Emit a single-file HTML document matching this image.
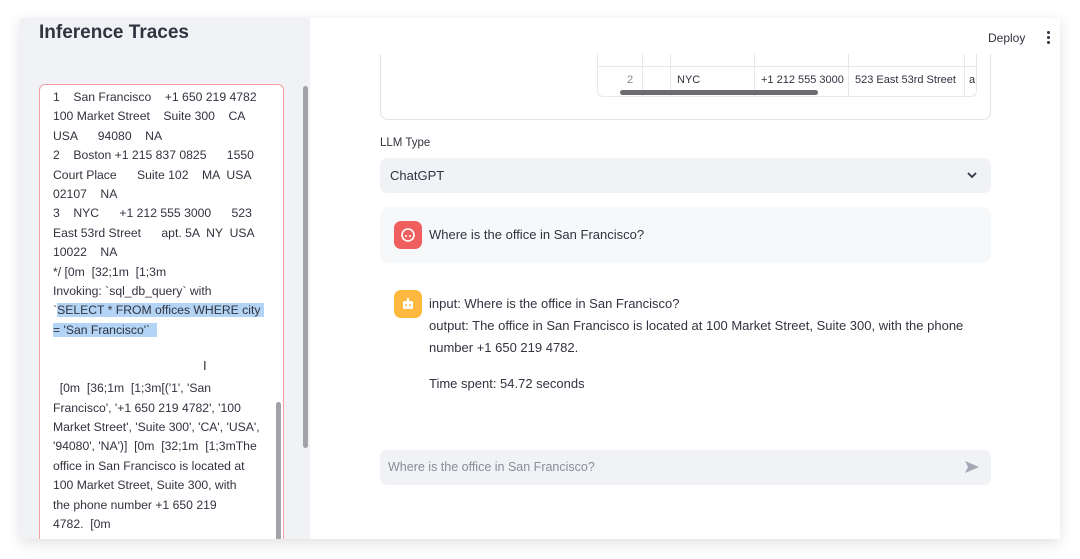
<!DOCTYPE html>
<html><head><meta charset="utf-8"><style>
*{margin:0;padding:0;box-sizing:border-box}
html,body{width:1080px;height:559px;overflow:hidden}
body{background:#fff;font-family:"Liberation Sans",sans-serif;position:relative;color:#31333f}
.app{position:absolute;left:20px;top:18px;width:1040px;height:521px;background:#fff;box-shadow:0 4px 14px rgba(0,0,0,.12);overflow:hidden}
.side{position:absolute;left:0;top:0;width:290px;height:521px;background:#f0f2f6;overflow:hidden}
.side h1{position:absolute;left:19px;top:4px;font-size:19px;font-weight:bold;color:#31333f}
.box{position:absolute;left:19px;top:66px;width:245px;height:470px;background:#fff;border:1px solid #f0a0a0;border-radius:6px;overflow:hidden}
.box pre{position:absolute;left:13px;top:3px;font-family:"Liberation Sans",sans-serif;font-size:12.2px;line-height:19.4px;white-space:pre;color:#31333f}
.hl{background:#b3d4f5}
.sb1{position:absolute;left:283px;top:68px;width:5px;height:362px;background:#a0a2a8;border-radius:3px}
.sb2{position:absolute;left:236px;top:317px;width:5px;height:160px;background:#a0a2a8;border-radius:3px}
.t{position:absolute;font-size:12.5px;color:#31333f}
</style></head><body>
<div class="app">
<div class="side"><h1>Inference Traces</h1>
<div class="box"><pre>1    San Francisco    +1 650 219 4782
100 Market Street    Suite 300    CA
USA      94080    NA
2    Boston +1 215 837 0825      1550
Court Place      Suite 102    MA  USA
02107    NA
3    NYC      +1 212 555 3000      523
East 53rd Street      apt. 5A  NY  USA
10022    NA
*/ [0m  [32;1m  [1;3m
Invoking: `sql_db_query` with
`<span class="hl">SELECT * FROM offices WHERE city </span>
<span class="hl">= 'San Francisco'`  </span>


  [0m  [36;1m  [1;3m[('1', 'San
Francisco', '+1 650 219 4782', '100
Market Street', 'Suite 300', 'CA', 'USA',
'94080', 'NA')]  [0m  [32;1m  [1;3mThe
office in San Francisco is located at
100 Market Street, Suite 300, with
the phone number +1 650 219
4782.  [0m</pre><div class="sb2"></div></div>
<div style="position:absolute;left:183px;top:340px;font-size:13px;color:#333">I</div>
<div class="sb1"></div>
</div>
<!-- table card -->
<div style="position:absolute;left:360px;top:-10px;width:611px;height:112px;border:1px solid #e0e2e6;border-radius:8px"></div>
<div style="position:absolute;left:577px;top:-10px;width:380px;height:89px;border:1px solid #e6e8ec;border-radius:6px;overflow:hidden">
<div style="position:absolute;left:0;top:57px;width:380px;border-top:1px solid #e6e8ec"></div>
<div style="position:absolute;left:44px;top:0;height:89px;border-left:1px solid #e6e8ec"></div>
<div style="position:absolute;left:72px;top:0;height:89px;border-left:1px solid #e6e8ec"></div>
<div style="position:absolute;left:156px;top:0;height:89px;border-left:1px solid #e6e8ec"></div>
<div style="position:absolute;left:250px;top:0;height:89px;border-left:1px solid #e6e8ec"></div>
<div style="position:absolute;left:366px;top:0;height:89px;border-left:1px solid #e6e8ec"></div>
<div class="t" style="left:29px;top:65px;font-size:11px;color:#888">2</div>
<div class="t" style="left:79px;top:65px;font-size:11px">NYC</div>
<div class="t" style="left:163px;top:65px;font-size:11px">+1 212 555 3000</div>
<div class="t" style="left:257px;top:65px;font-size:11px">523 East 53rd Street</div>
<div class="t" style="left:371px;top:65px;font-size:11px">a</div>
<div style="position:absolute;left:22px;top:81px;width:198px;height:5px;background:#6a6c70;border-radius:3px"></div>
</div>
<div style="position:absolute;left:290px;top:0;width:750px;height:36px;background:rgba(255,255,255,.96)"></div>
<div class="t" style="left:968px;top:13px;font-size:12px">Deploy</div>
<div style="position:absolute;left:1027px;top:13px;width:3px">
<div style="width:3px;height:3px;border-radius:50%;background:#31333f;margin-bottom:2px"></div><div style="width:3px;height:3px;border-radius:50%;background:#31333f;margin-bottom:2px"></div><div style="width:3px;height:3px;border-radius:50%;background:#31333f"></div></div>
<div class="t" style="left:360px;top:119px;font-size:11.5px">LLM Type</div>
<div style="position:absolute;left:360px;top:140px;width:611px;height:35px;background:#f0f2f6;border-radius:7px"></div>
<div class="t" style="left:370px;top:150px;font-size:13px">ChatGPT</div>
<svg style="position:absolute;left:947px;top:153px" width="10" height="8" viewBox="0 0 10 8"><path d="M1 2l4 4 4-4" stroke="#31333f" stroke-width="1.8" fill="none"/></svg>
<div style="position:absolute;left:360px;top:189px;width:611px;height:56px;background:#f7f8fa;border-radius:8px"></div>
<div style="position:absolute;left:374px;top:203px;width:28px;height:28px;background:#f05f5f;border-radius:7px"></div>
<svg style="position:absolute;left:380px;top:209px" width="16" height="16" viewBox="0 0 16 16"><circle cx="8" cy="8" r="6" stroke="#fff" stroke-width="1.6" fill="none"/><circle cx="6" cy="9" r="1" fill="#fff"/><circle cx="10" cy="9" r="1" fill="#fff"/></svg>
<div class="t" style="left:409px;top:209px;font-size:13px">Where is the office in San Francisco?</div>
<div style="position:absolute;left:374px;top:272px;width:28px;height:28px;background:#fdb93d;border-radius:7px"></div>
<svg style="position:absolute;left:380px;top:278px" width="16" height="16" viewBox="0 0 16 16"><rect x="3" y="5" width="10" height="8" rx="1.5" fill="#fff"/><rect x="7" y="2" width="2" height="3" fill="#fff"/><circle cx="6" cy="9" r="1" fill="#fdb93d"/><circle cx="10" cy="9" r="1" fill="#fdb93d"/></svg>
<div class="t" style="left:409px;top:275px;font-size:13px;line-height:22px">input: Where is the office in San Francisco?<br>output: The office in San Francisco is located at 100 Market Street, Suite 300, with the phone<br>number +1 650 219 4782.<div style="height:14px"></div>Time spent: 54.72 seconds</div>
<div style="position:absolute;left:360px;top:432px;width:611px;height:35px;background:#f0f2f6;border-radius:7px"></div>
<div class="t" style="left:368px;top:442px;font-size:12.5px;color:#8a8d96">Where is the office in San Francisco?</div>
<svg style="position:absolute;left:944px;top:442px" width="16" height="14" viewBox="0 0 16 14"><path d="M1 1l14 6-14 6 3-6z" fill="#a3a8b4"/></svg>
</div>
</body></html>
